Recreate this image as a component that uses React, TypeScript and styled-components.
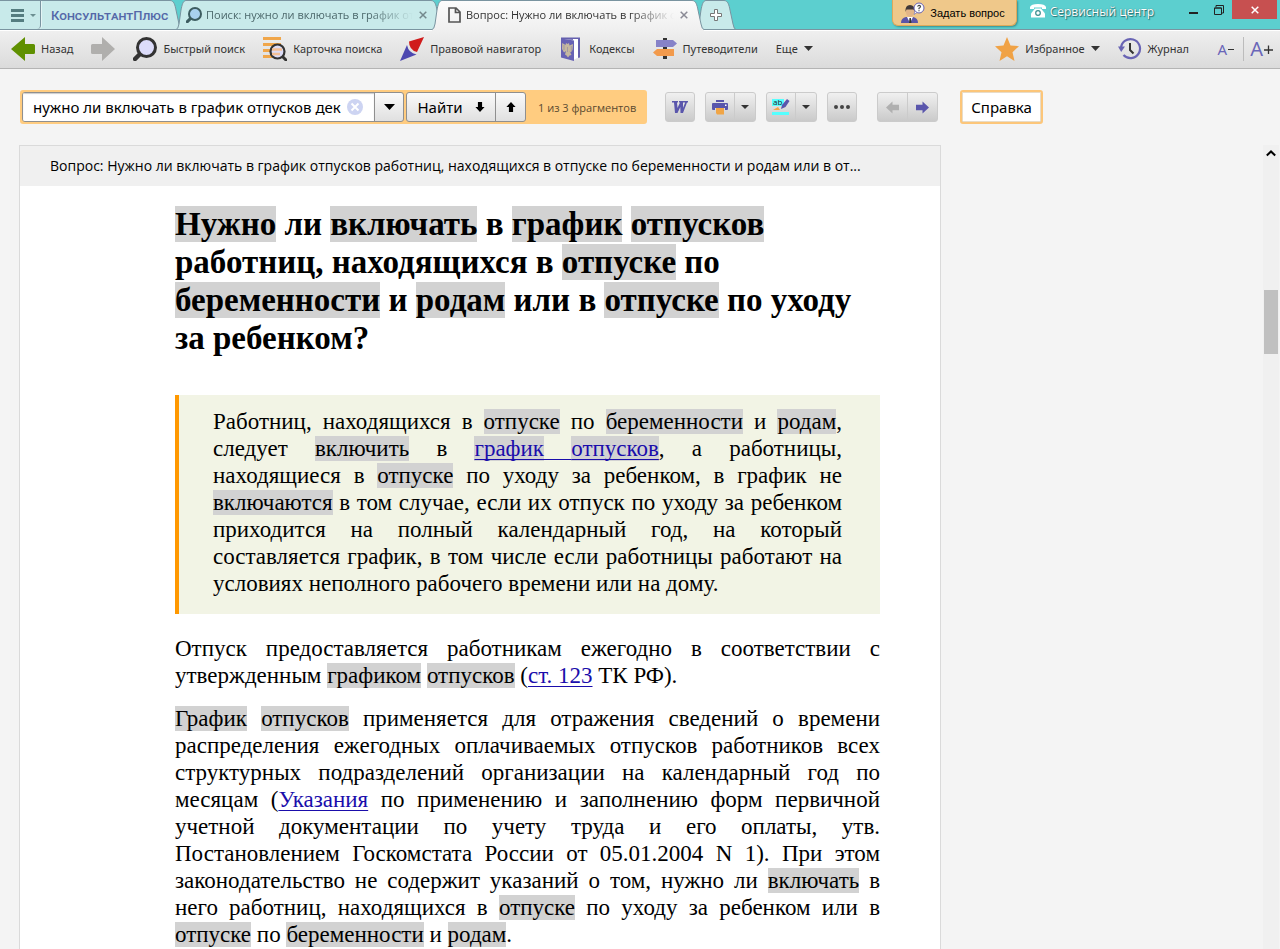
import React from 'react';
import styled, { createGlobalStyle } from 'styled-components';

const ui = '"Open Sans", "Noto Sans", sans-serif';

const GlobalStyle = createGlobalStyle`
  *, *::before, *::after { box-sizing: border-box; }
  body { margin: 0; background: #f4f4f4; color: #000; font-family: ${ui}; }
  button { font: inherit; color: inherit; margin: 0; padding: 0; border: 0; background: none; }
  svg { display: block; flex: none; }
  mark { background: #d2d2d2; color: inherit; }
`;

const Page = styled.div`
  min-height: 100vh;
  display: flex;
  flex-direction: column;
`;

/* ---------- title bar ---------- */
const TitleBar = styled.header`
  display: flex;
  height: 31px;
  background: linear-gradient(#5ccfcf 29px, #7a94a0 29px, #7a94a0 30px, #fff 30px);
  font-size: 11px;
`;

const Tabs = styled.nav`
  display: flex;
`;

const Tab = styled.div<{ $active?: boolean; $overlap?: number }>`
  display: flex;
  position: relative;
  z-index: ${(p) => (p.$active ? 2 : 1)};
  height: ${(p) => (p.$active ? 31 : 30)}px;
  margin-left: -${(p) => p.$overlap ?? 0}px;
  color: ${(p) => (p.$active ? '#333' : '#4c686b')};
`;

const TabBody = styled.div<{ $active?: boolean; $width: number }>`
  display: flex;
  align-items: center;
  width: ${(p) => p.$width}px;
  padding-bottom: ${(p) => (p.$active ? 2 : 0)}px;
  border-top: 1px solid #7a94a0;
  border-bottom: ${(p) => (p.$active ? '0' : '1px solid #7a94a0')};
  background: ${(p) => (p.$active ? 'linear-gradient(#fcfcfc, #efefef)' : '#c8eaea')};
`;

const MenuButton = styled.button`
  display: flex;
  flex: none;
  align-items: center;
  gap: 6px;
  align-self: stretch;
  width: 41px;
  padding-left: 11px;
  border-right: 1px solid #7a94a0;
  border-bottom-right-radius: 4px;
  box-shadow: 1px 0 0 #e4f5f5;
`;

const Logo = styled.span`
  padding-left: 10px;
  font: 500 13px Roboto, "Liberation Sans", sans-serif;
  font-variant: small-caps;
  white-space: nowrap;
  color: #5468a8;
`;

const TabButton = styled.button`
  flex: 1;
  min-width: 0;
  display: flex;
  align-items: center;
  gap: 4px;
`;

const TabText = styled.span`
  flex: 1;
  min-width: 0;
  overflow: hidden;
  white-space: nowrap;
  text-align: left;
  line-height: 18px;
  mask-image: linear-gradient(90deg, #000 78%, transparent 99%);
`;

const TabClose = styled.button`
  padding: 4px;
`;

const Grow = styled.div`
  flex: 1;
`;

const AskButton = styled.button`
  display: flex;
  align-items: center;
  gap: 5px;
  height: 26px;
  padding: 0 11px 0 8px;
  margin-right: 12px;
  border: 1px solid #dfa95a;
  border-top: 0;
  border-radius: 0 0 6px 6px;
  background: #efc88a;
  box-shadow: 1px 1px 2px #3a8f8f;
  font: 11px "Liberation Sans", sans-serif;
`;

const ServiceLink = styled.a`
  display: flex;
  align-items: center;
  gap: 3px;
  height: 22px;
  margin-right: 26px;
  color: #fff;
  font: 12px ${ui};
  text-decoration: none;
  text-shadow: 1px 1px 1px #256c6c, 0 0 1px #256c6c;
`;

const WindowButton = styled.button<{ $close?: boolean }>`
  display: flex;
  align-items: center;
  justify-content: center;
  width: ${(p) => (p.$close ? 45 : 26)}px;
  height: 19px;
  margin-right: ${(p) => (p.$close ? 3 : 0)}px;
  background: ${(p) => (p.$close ? '#c75050' : 'transparent')};
`;

/* ---------- main toolbar ---------- */
const Toolbar = styled.div`
  display: flex;
  align-items: center;
  gap: 18px;
  height: 38px;
  padding: 0 7px 2px 11px;
  border-bottom: 1px solid #b4b4b4;
  background: linear-gradient(#efefef, #dbdbdb);
  color: #333;
  font: 11px "Noto Sans", sans-serif;
`;

const Tool = styled.button`
  display: flex;
  align-items: center;
  gap: 6px;
  white-space: nowrap;
`;

const SizeTools = styled.div`
  display: flex;
  align-items: center;
  margin-left: 9px;
`;

const SizeButton = styled.button<{ $large?: boolean }>`
  display: flex;
  align-items: center;
  justify-content: flex-end;
  height: 24px;
  width: ${(p) => (p.$large ? 30 : 27)}px;
  padding-right: ${(p) => (p.$large ? 0 : 9)}px;
  border-left: ${(p) => (p.$large ? '1px solid #bcbcbc' : '0')};
  color: #6a66b8;
  font-size: ${(p) => (p.$large ? 20 : 15)}px;
`;

/* ---------- find bar ---------- */
const FindBar = styled.div`
  display: flex;
  align-items: center;
  padding: 21px 20px;
`;

const FindBox = styled.form`
  display: flex;
  align-items: center;
  gap: 2px;
  height: 34px;
  padding: 0 11px 0 2px;
  margin-right: 18px;
  border-radius: 3px;
  background: #ffcc80;
`;

const Group = styled.div<{ $dark?: boolean }>`
  display: flex;
  flex: none;
  height: 30px;
  border: 1px solid ${(p) => (p.$dark ? '#8f8f8f' : '#cbcbcb')};
  border-radius: 3px;
  overflow: hidden;
  background: ${(p) => (p.$dark ? 'linear-gradient(#fafafa, #e0e0e0)' : 'linear-gradient(#f0f0f0, #cacaca)')};
  & > * + * { border-left: 1px solid ${(p) => (p.$dark ? '#8f8f8f' : '#cbcbcb')}; }
`;

const NavGroup = styled(Group)`
  margin-left: 20px;
`;

const Field = styled.div`
  display: flex;
  align-items: center;
  width: 351px;
  padding: 0 11px 0 10px;
  background: #fff;
  box-shadow: inset 0 1px 1px #ccc;
`;

const FieldInput = styled.input`
  flex: 1;
  min-width: 0;
  border: 0;
  padding: 0;
  outline: 0;
  background: transparent;
  font: 15px "Noto Sans", sans-serif;
  color: #000;
`;

const GroupButton = styled.button<{ $width: number }>`
  display: flex;
  align-items: center;
  justify-content: center;
  gap: 12px;
  width: ${(p) => p.$width}px;
  font: 15px "Noto Sans", sans-serif;
`;

const Count = styled.output`
  padding-left: 10px;
  color: #5a4a30;
  font-size: 11px;
  white-space: nowrap;
`;

const Actions = styled.div`
  display: flex;
  gap: 10px;
`;

const HelpButton = styled.button`
  height: 34px;
  padding: 0 9px;
  border: 2px solid #fcc67a;
  border-radius: 3px;
  margin-left: 22px;
  background: #fff;
  box-shadow: inset 0 0 0 1px #e8dcc8, inset 0 -1px 0 #999;
  font: 15px "Noto Sans", sans-serif;
`;

/* ---------- document ---------- */
const Main = styled.main`
  flex: 1;
  display: flex;
  justify-content: space-between;
  padding: 0 1px 0 19px;
`;

const Doc = styled.article`
  width: 922px;
  border: 1px solid #dadada;
  border-bottom: 0;
  background: #fff;
`;

const DocTitle = styled.div`
  height: 40px;
  padding: 0 30px;
  background: #f0f0f0;
  font-size: 14px;
  line-height: 40px;
  white-space: nowrap;
`;

const DocBody = styled.div`
  padding: 19px 60px 0 155px;
  font: 23px/27px "Liberation Serif", serif;
  text-align: justify;
`;

const Heading = styled.h1`
  margin: 0 0 38px;
  font-size: 33px;
  line-height: 38px;
  text-align: left;
`;

const Quote = styled.blockquote`
  margin: 0 0 21px;
  padding: 13px 38px 17px 34px;
  border-left: 4px solid #ff9800;
  background: #f2f4e5;
`;

const Paragraph = styled.p`
  margin: 0 0 16px;
  &:last-child { margin-bottom: 0; }
`;

const DocLink = styled.a`
  color: #1a0dab;
  text-decoration: underline 1px;
  text-underline-offset: 3px;
  text-decoration-skip-ink: none;
`;

const ScrollTrack = styled.div`
  width: 16px;
  padding: 5px 1px 0;
  background: #f0f0f0;
`;

const ScrollUp = styled.button`
  display: flex;
  justify-content: center;
  width: 100%;
  height: 8px;
`;

const ScrollThumb = styled.div`
  height: 64px;
  margin-top: 132px;
  background: #c0c0c0;
`;

/* ---------- drawings ---------- */
const Caret = ({ w = 9, c = '#333' }: { w?: number; c?: string }) => (
  <svg width={w} height={Math.ceil(w / 2)} viewBox="0 0 10 5" preserveAspectRatio="none"><path d="M0 0h10L5 5z" fill={c} /></svg>
);

const EdgeRight = ({ active = false }: { active?: boolean }) => (
  <svg width="12" height={active ? 31 : 30} viewBox={`0 0 12 ${active ? 31 : 30}`}>
    <defs><linearGradient id="edgeR" x2="0" y2="1"><stop stopColor="#fcfcfc" /><stop offset="1" stopColor="#efefef" /></linearGradient></defs>
    <path d={`M0 .5C4 .5 5 5 6 10L9 24Q10 29.500 12 29.500${active ? 'V31H0z' : 'H0z'}`} fill={active ? 'url(#edgeR)' : '#c8eaea'} />
    <path d={`M0 .5C4 .5 5 5 6 10L9 24Q10 29.500 12 29.500${active ? '' : 'H0'}`} fill="none" stroke="#7a94a0" />
  </svg>
);

const EdgeLeft = ({ active = false }: { active?: boolean }) => (
  <svg width="10" height={active ? 31 : 30} viewBox={`0 0 10 ${active ? 31 : 30}`}>
    <defs><linearGradient id="edgeL" x2="0" y2="1"><stop stopColor="#fcfcfc" /><stop offset="1" stopColor="#efefef" /></linearGradient></defs>
    <path d={`M10 .5C7 .5 6 5 5 10L3 24Q2 29.500 0 29.500${active ? 'V31H10z' : 'H10z'}`} fill={active ? 'url(#edgeL)' : '#c8eaea'} />
    <path d={`M10 .5C7 .5 6 5 5 10L3 24Q2 29.500 0 29.500${active ? '' : 'H10'}`} fill="none" stroke="#7a94a0" />
  </svg>
);

const Lens = ({ size, dark, fill }: { size: number; dark: string; fill: string }) => (
  <svg width={size} height={size} viewBox="0 0 24 24">
    <path d="M7 17l-5 5" stroke={dark} strokeWidth="4.500" strokeLinecap="round" />
    <circle cx="13.500" cy="10.500" r="9" fill={fill} stroke={dark} strokeWidth="3" />
  </svg>
);

const BackIcon = () => (
  <svg width="24" height="24" viewBox="0 0 24 24"><path d="M0 12L14 0v7h8.500a1.500 1.500 0 0 1 1.500 1.500v7a1.500 1.500 0 0 1-1.500 1.500H14v7z" fill="#5f9000" /></svg>
);
const ForwardIcon = () => (
  <svg width="24" height="24" viewBox="0 0 24 24"><path d="M24 12L11 0v7H1.500A1.500 1.500 0 0 0 0 8.500v7A1.500 1.500 0 0 0 1.500 17H11v7z" fill="#b0afad" /></svg>
);
const CardIcon = () => (
  <svg width="24" height="24" viewBox="0 0 24 24">
    <path d="M0 1.500h18M0 7.500h18M0 13.500h18M0 19.500h12" stroke="#f0a64a" strokeWidth="3" />
    <path d="M18 18l5 5" stroke="#333" strokeWidth="3" strokeLinecap="round" />
    <circle cx="14.500" cy="14.500" r="7" fill="#dcdcf6" stroke="#333" strokeWidth="2.200" />
    <path d="M9 12.500h10M9 17h8" stroke="#f3bf94" strokeWidth="2.400" />
  </svg>
);
const NavigatorIcon = () => (
  <svg width="24" height="24" viewBox="0 0 24 24">
    <path d="M24 0L9 4.500Q9 13 17 15z" fill="#d01c1c" />
    <path d="M7 8Q8.500 16 16.500 17.500L0 24z" fill="#4d48b0" />
  </svg>
);
const CodexIcon = () => (
  <svg width="24" height="24" viewBox="0 0 24 24">
    <path d="M2 .5h19v20l-5 1V3L2 2z" fill="#6560ae" />
    <path d="M14 2h5v19l-5 2z" fill="#fff" />
    <path d="M2 1.500l13 2V24L2 20.500z" fill="#6661b4" />
    <path d="M7 6l1.500 1L10 6l.5 2.500L14 7l-.5 6-1.700 2.500L10.500 14l2 4-2 .5-1.500 2-1.500-2-1.500-1 1-3.500-2 1.500L3 12l.2-6L6.500 8z" fill="#c5b89f" />
    <path d="M5 8v5M12.300 9v5M8.500 10v5" stroke="#8d84a8" strokeWidth=".6" />
  </svg>
);
const SignpostIcon = () => (
  <svg width="24" height="24" viewBox="0 0 24 24">
    <path d="M12 1v21" stroke="#333" strokeWidth="4" />
    <path d="M3 3h17l4 3.500-4 3.500H3z" fill="#8682c8" />
    <path d="M21 12H4l-4 3.500L4 19h17z" fill="#f29a4c" />
  </svg>
);
const StarIcon = () => (
  <svg width="24" height="24" viewBox="0 0 24 24"><path d="M12 0l3.500 8.500L24 9.200l-6.500 6L19.500 24 12 19.300 4.500 24l2-8.800L0 9.200l8.500-.7z" fill="#f0a245" /></svg>
);
const ClockIcon = () => (
  <svg width="24" height="24" viewBox="0 0 24 24">
    <path d="M3 11.500A9.500 9.500 0 1 1 5.500 18" fill="none" stroke="#6964b4" strokeWidth="2.200" />
    <path d="M0 9.500h7L3.200 15z" fill="#6964b4" />
    <path d="M12 6v7l3.500 3.500" fill="none" stroke="#333" strokeWidth="2" />
  </svg>
);
const PersonIcon = () => (
  <svg width="24" height="22" viewBox="0 0 24 22">
    <path d="M0 21q0-5 5-6h7q5 1 5 6z" fill="#5a55a8" />
    <path d="M6 15l3 6 3-6z" fill="#fff" /><path d="M8.500 16h1.400l.5 5H8z" fill="#333" />
    <path d="M5 7h8v4q-1 4-4 4t-4-4z" fill="#e2b588" />
    <path d="M4.500 10Q4 3 9 3t4.800 7L12.500 7.500h-7z" fill="#403838" />
    <circle cx="18" cy="6" r="5" fill="#fff" stroke="#6560b4" /><path d="M14 9l-1 3.500 3-2z" fill="#fff" stroke="#6560b4" strokeWidth=".6" />
    <path d="M16.500 4.500q1.500-2 3-.3 0 1.500-1.500 2v1M18 8.200v1" fill="none" stroke="#444" strokeWidth="1.200" />
  </svg>
);
const PhoneIcon = () => (
  <svg width="18" height="16" viewBox="0 0 18 16">
    <path d="M1 6V4q1-3 8-3t8 3v2h-4V4.500H5V6z" fill="#fff" />
    <path d="M6 5.500h6l4 5v4H2v-4z" fill="#fff" />
    <circle cx="9" cy="10" r="2.300" fill="none" stroke="#3a8f8f" strokeWidth="1.200" />
  </svg>
);
const Cross = ({ color, size }: { color: string; size: number }) => (
  <svg width={size} height={size} viewBox="0 0 8 8"><path d="M.7.7l6.600 6.600M7.300.7L.7 7.300" stroke={color} strokeWidth="1.500" /></svg>
);
const Arrow = ({ turn, color, size = 12 }: { turn: number; color: string; size?: number }) => (
  <svg width={size} height={size} viewBox="0 0 12 12"><path transform={`rotate(${turn} 6 6)`} d="M6 0l5.500 6H8.500V12h-5V6H.5z" fill={color} /></svg>
);
const PrinterIcon = () => (
  <svg width="16" height="16" viewBox="0 0 16 16">
    <path d="M4 1h8v2H4z" fill="#5a56ac" /><path d="M1 4h14q1 0 1 1v5q0 1-1 1h-2V9H3v2H1q-1 0-1-1V5q0-1 1-1z" fill="#5a56ac" />
    <path d="M13 5.500h1.500V7H13z" fill="#fff" /><path d="M4 9h8v6.500H5L4 14z" fill="#f0a546" />
  </svg>
);
const MarkerIcon = () => (
  <svg width="18" height="18" viewBox="0 0 18 18">
    <path d="M0 1h12v7H0z" fill="#5ff" />
    <text x="1" y="7" fontFamily="Open Sans" fontSize="8" fill="#222">ab</text>
    <path d="M9 11l1-4 5-6 2.500 2-4 6z" fill="#5a56ac" /><path d="M1 12l5-3 2 3z" fill="#f0a546" /><path d="M0 14h17v3H0z" fill="#5ff" />
  </svg>
);

export default function App() {
  return (
    <Page>
      <GlobalStyle />
      <TitleBar>
        <Tabs aria-label="Вкладки">
          <Tab>
            <TabBody $width={170}>
              <MenuButton aria-label="Меню">
                <svg width="13" height="13" viewBox="0 0 13 13"><path d="M0 1.500h13M0 6.500h13M0 11.500h13" stroke="#557d80" strokeWidth="3" /></svg>
                <Caret w={6} c="#6c8f92" />
              </MenuButton>
              <Logo>КонсультантПлюс</Logo>
            </TabBody>
            <EdgeRight />
          </Tab>
          <Tab $overlap={6}>
            <EdgeLeft />
            <TabBody $width={245}>
              <TabButton>
                <Lens size={16} dark="#3d5c60" fill="#a9d0ee" />
                <TabText>Поиск: нужно ли включать в график от</TabText>
              </TabButton>
              <TabClose aria-label="Закрыть вкладку"><Cross color="#74888c" size={8} /></TabClose>
            </TabBody>
            <EdgeRight />
          </Tab>
          <Tab $active $overlap={11}>
            <EdgeLeft active />
            <TabBody $active $width={250}>
              <TabButton>
                <svg width="20" height="16" viewBox="0 0 20 16"><path d="M7 1h7l4 4v10H7zM13.500 1v4.500H18" fill="none" stroke="#555" strokeWidth="1.700" /></svg>
                <TabText>Вопрос: Нужно ли включать в график о</TabText>
              </TabButton>
              <TabClose aria-label="Закрыть вкладку"><Cross color="#8a8a95" size={8} /></TabClose>
            </TabBody>
            <EdgeRight active />
          </Tab>
          <Tab $overlap={8}>
            <EdgeLeft />
            <TabBody $width={18}>
              <TabClose aria-label="Новая вкладка">
                <svg width="12" height="12" viewBox="0 0 12 12"><path d="M4.500.5h3v4h4v3h-4v4h-3v-4h-4v-3h4z" fill="#fff" stroke="#777" /></svg>
              </TabClose>
            </TabBody>
            <EdgeRight />
          </Tab>
        </Tabs>
        <Grow />
        <AskButton><PersonIcon />Задать вопрос</AskButton>
        <ServiceLink href="#service"><PhoneIcon />Сервисный центр</ServiceLink>
        <WindowButton aria-label="Свернуть"><svg width="9" height="8" viewBox="0 0 9 8"><path d="M0 7h9" stroke="#222" strokeWidth="2" /></svg></WindowButton>
        <WindowButton aria-label="Восстановить"><svg width="10" height="10" viewBox="0 0 10 10"><path d="M.5 3h7v6.500h-7zM2 2V.5h7.500V8H8M.5 3h7" fill="none" stroke="#222" /></svg></WindowButton>
        <WindowButton $close aria-label="Закрыть"><Cross color="#fff" size={8} /></WindowButton>
      </TitleBar>

      <Toolbar>
        <Tool><BackIcon />Назад</Tool>
        <Tool aria-label="Вперед"><ForwardIcon /></Tool>
        <Tool><Lens size={24} dark="#333" fill="#dcdcfa" />Быстрый поиск</Tool>
        <Tool><CardIcon />Карточка поиска</Tool>
        <Tool><NavigatorIcon />Правовой навигатор</Tool>
        <Tool><CodexIcon />Кодексы</Tool>
        <Tool><SignpostIcon />Путеводители</Tool>
        <Tool>Еще<Caret /></Tool>
        <Grow />
        <Tool><StarIcon />Избранное<Caret /></Tool>
        <Tool><ClockIcon />Журнал</Tool>
        <SizeTools>
          <SizeButton aria-label="Уменьшить шрифт">А<svg width="7" height="8" viewBox="0 0 7 8"><path d="M1 4.500h6" stroke="#333" /></svg></SizeButton>
          <SizeButton $large aria-label="Увеличить шрифт">А<svg width="10" height="10" viewBox="0 0 10 10"><path d="M1 6h9M5.500 1.500v9" stroke="#333" strokeWidth="1.300" /></svg></SizeButton>
        </SizeTools>
      </Toolbar>

      <FindBar>
        <FindBox onSubmit={(e) => e.preventDefault()}>
          <Group $dark>
            <Field>
              <FieldInput aria-label="Поиск в тексте" defaultValue="нужно ли включать в график отпусков дек" />
              <button type="button" aria-label="Очистить">
                <svg width="16" height="16" viewBox="0 0 16 16"><circle cx="8" cy="8" r="8" fill="#cdd4f2" /><path d="M4.500 4.500l7 7M11.500 4.500l-7 7" stroke="#fff" strokeWidth="2" /></svg>
              </button>
            </Field>
            <GroupButton $width={29} type="button" aria-label="История"><Caret w={11} c="#000" /></GroupButton>
          </Group>
          <Group $dark>
            <GroupButton $width={88}>Найти<Arrow turn={180} color="#000" size={10} /></GroupButton>
            <GroupButton $width={30} type="button" aria-label="Предыдущий"><Arrow turn={0} color="#000" size={10} /></GroupButton>
          </Group>
          <Count>1 из 3 фрагментов</Count>
        </FindBox>
        <Actions>
          <Group>
            <GroupButton $width={28} aria-label="Экспорт в Word">
              <svg width="16" height="12" viewBox="0 0 16 12"><path d="M0 0h6v1.500H5L5.500 7 8 1.500H7V0h5v1.500h-1L11 7l2.200-5.500H12V0h4v1.500h-1L11 12H8.500L8.300 6 5.500 12H3L2 1.500H0z" fill="#5a56ac" /></svg>
            </GroupButton>
          </Group>
          <Group>
            <GroupButton $width={28} aria-label="Печать"><PrinterIcon /></GroupButton>
            <GroupButton $width={21} aria-label="Параметры печати"><Caret w={8} /></GroupButton>
          </Group>
          <Group>
            <GroupButton $width={28} aria-label="Выделить цветом"><MarkerIcon /></GroupButton>
            <GroupButton $width={21} aria-label="Выбор цвета"><Caret w={8} /></GroupButton>
          </Group>
          <Group>
            <GroupButton $width={28} aria-label="Еще">
              <svg width="16" height="4" viewBox="0 0 16 4"><path d="M2 2h0M8 2h0M14 2h0" stroke="#444" strokeWidth="4" strokeLinecap="round" /></svg>
            </GroupButton>
          </Group>
        </Actions>
        <NavGroup>
          <GroupButton $width={29} aria-label="Назад"><Arrow turn={-90} color="#b0b0b0" size={13} /></GroupButton>
          <GroupButton $width={30} aria-label="Вперед"><Arrow turn={90} color="#5a56ac" size={13} /></GroupButton>
        </NavGroup>
        <HelpButton>Справка</HelpButton>
      </FindBar>

      <Main>
        <Doc>
          <DocTitle>Вопрос: Нужно ли включать в график отпусков работниц, находящихся в отпуске по беременности и родам или в от...</DocTitle>
          <DocBody>
            <Heading>
              <mark>Нужно</mark> ли <mark>включать</mark> в <mark>график</mark> <mark>отпусков</mark> работниц, находящихся в <mark>отпуске</mark> по <mark>беременности</mark> и <mark>родам</mark> или в <mark>отпуске</mark> по уходу за ребенком?
            </Heading>
            <Quote>
              Работниц, находящихся в <mark>отпуске</mark> по <mark>беременности</mark> и <mark>родам</mark>, следует <mark>включить</mark> в <DocLink href="#grafik"><mark>график</mark> <mark>отпусков</mark></DocLink>, а работницы, находящиеся в <mark>отпуске</mark> по уходу за ребенком, в график не <mark>включаются</mark> в том случае, если их отпуск по уходу за ребенком приходится на полный календарный год, на который составляется график, в том числе если работницы работают на условиях неполного рабочего времени или на дому.
            </Quote>
            <Paragraph>
              Отпуск предоставляется работникам ежегодно в соответствии с утвержденным <mark>графиком</mark> <mark>отпусков</mark> (<DocLink href="#st123">ст. 123</DocLink> ТК РФ).
            </Paragraph>
            <Paragraph>
              <mark>График</mark> <mark>отпусков</mark> применяется для отражения сведений о времени распределения ежегодных оплачиваемых отпусков работников всех структурных подразделений организации на календарный год по месяцам (<DocLink href="#ukazaniya">Указания</DocLink> по применению и заполнению форм первичной учетной документации по учету труда и его оплаты, утв. Постановлением Госкомстата России от 05.01.2004 N 1). При этом законодательство не содержит указаний о том, нужно ли <mark>включать</mark> в него работниц, находящихся в <mark>отпуске</mark> по уходу за ребенком или в <mark>отпуске</mark> по <mark>беременности</mark> и <mark>родам</mark>.
            </Paragraph>
          </DocBody>
        </Doc>
        <ScrollTrack>
          <ScrollUp aria-label="Прокрутить вверх"><svg width="10" height="7" viewBox="0 0 10 7"><path d="M.8 5.500L5 1.500l4.200 4" fill="none" stroke="#000" strokeWidth="2" /></svg></ScrollUp>
          <ScrollThumb />
        </ScrollTrack>
      </Main>
    </Page>
  );
}
